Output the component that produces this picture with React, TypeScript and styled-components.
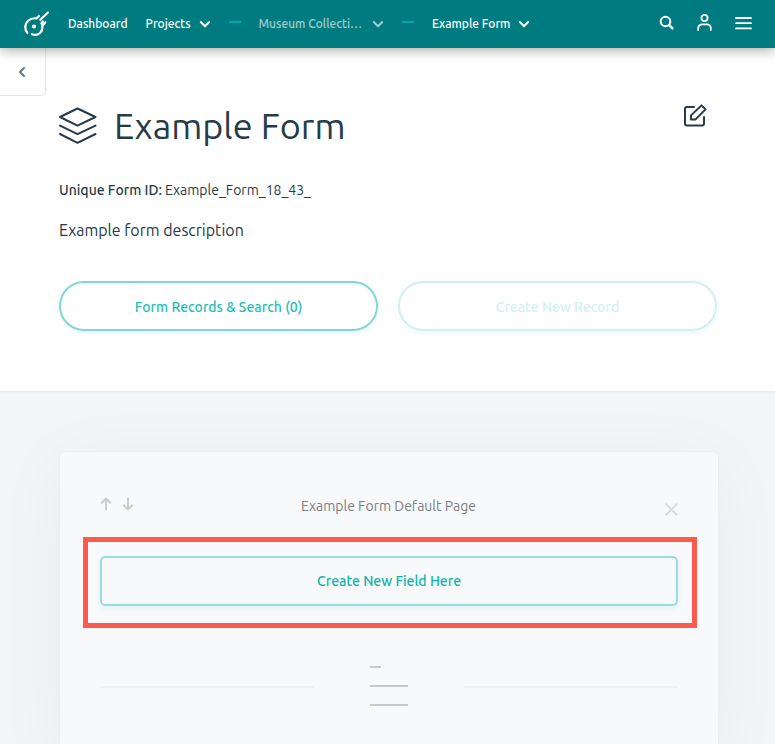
import React from "react";
import styled, { createGlobalStyle } from "styled-components";

const Global = createGlobalStyle`
  * { box-sizing: border-box; }
  body {
    margin: 0;
    background: #f4f5f7;
    color: #263b47;
    font-family: Ubuntu, "Noto Sans", "Open Sans", sans-serif;
  }
  button { font-family: inherit; margin: 0; cursor: pointer; }
  svg { display: block; flex: none; }
`;

const TopBar = styled.header`
  position: relative;
  z-index: 2;
  display: flex;
  align-items: center;
  height: 48px;
  padding: 0 23px;
  background: #007c80;
  box-shadow: 0 2px 12px rgba(0, 0, 0, 0.35);
`;

const HomeLink = styled.a`
  display: flex;
`;

const Trail = styled.nav`
  display: flex;
  align-items: center;
  flex: 1;
  min-width: 0;
  gap: 18px;
  margin-left: 18px;
`;

const NavLink = styled.a`
  color: #fff;
  font-size: 12px;
  font-weight: 500;
  line-height: 16px;
  text-decoration: none;
  white-space: nowrap;
`;

const Crumb = styled.button<{ $faded?: boolean }>`
  display: flex;
  align-items: center;
  gap: ${(p) => (p.$faded ? 10 : 8)}px;
  padding: 0;
  border: 0;
  background: none;
  color: #fff;
  opacity: ${(p) => (p.$faded ? 0.62 : 1)};
  font-size: 12px;
  font-weight: 500;
  line-height: 16px;
  white-space: nowrap;
`;

const Dash = styled.span`
  flex: none;
  width: 12px;
  height: 2px;
  margin-bottom: 4px;
  background: #00a9a6;
`;

const Tools = styled.div`
  display: flex;
  align-items: center;
  gap: 23px;
  margin-bottom: 3px;
`;

const IconButton = styled.button`
  display: flex;
  padding: 0;
  border: 0;
  background: none;
  color: inherit;
`;

const ToolButton = styled(IconButton)`
  color: #fff;
`;

const Hero = styled.section`
  position: relative;
  padding: 52px 58px 60px 59px;
  background: #fff;
  box-shadow: 0 1px 3px rgba(0, 0, 0, 0.08);
`;

const BackTab = styled.button`
  position: absolute;
  top: 0;
  left: 0;
  display: flex;
  align-items: center;
  justify-content: center;
  width: 46px;
  height: 48px;
  padding: 0 2px 0 0;
  border: 1px solid #e4e6e8;
  border-width: 0 1px 1px 0;
  border-radius: 0 0 5px 0;
  background: #fff;
  color: #68737b;
`;

const TitleRow = styled.div`
  display: flex;
  align-items: center;
  gap: 17px;
  height: 52px;
`;

const Title = styled.h1`
  flex: 1;
  margin: 0;
  font-size: 36px;
  font-weight: 400;
  line-height: 52px;
`;

const EditButton = styled(IconButton)`
  align-self: flex-start;
  margin: 4px 10px 0 0;
`;

const FormId = styled.p`
  margin: 28px 0 0;
  font-size: 14px;
  line-height: 20px;
`;

const Strong = styled.strong`
  font-weight: 500;
`;

const Description = styled.p`
  margin: 18px 0 0;
  font-size: 16px;
  line-height: 24px;
`;

const Actions = styled.div`
  display: grid;
  grid-template-columns: 1fr 1fr;
  gap: 20px;
  margin-top: 39px;
`;

const OutlineButton = styled.button<{ $tone: string; $edge: string; $square?: boolean }>`
  width: 100%;
  height: 50px;
  padding: ${(p) => (p.$square ? 0 : 2)}px 0 0;
  border: 2px solid ${(p) => p.$edge};
  border-radius: ${(p) => (p.$square ? 5 : 25)}px;
  background: transparent;
  box-shadow: 0 3px 6px rgba(0, 180, 170, 0.08);
  color: ${(p) => p.$tone};
  font-size: 14px;
  font-weight: 500;
  line-height: 20px;
`;

const Builder = styled.main`
  padding: 60px 56px 0 59px;
  overflow: hidden;
`;

const PageCard = styled.section`
  min-height: 300px;
  padding: 37px 21px 0 23px;
  border: 1px solid #eceef0;
  border-radius: 6px;
  background: #f8f9fb;
  box-shadow: 0 12px 70px rgba(0, 0, 0, 0.05);
`;

const PageHead = styled.div`
  display: grid;
  grid-template-columns: 60px 1fr 60px;
  align-items: center;
  height: 34px;
  padding: 0 19px 0 16px;
`;

const Arrows = styled.div`
  display: flex;
  gap: 8px;
  margin-bottom: 4px;
  color: #c9cdd0;
`;

const PageName = styled.h2`
  margin: 0;
  color: #7c7e80;
  font-size: 14px;
  font-weight: 400;
  line-height: 20px;
  text-align: center;
`;

const CloseButton = styled(IconButton)`
  justify-self: end;
  margin-top: 6px;
  color: #d9dbdd;
`;

const Highlight = styled.div`
  margin-top: 14px;
  padding: 14px 14px 17px 12px;
  border: 5px solid #ff5a4d;
`;

const Divider = styled.div`
  display: grid;
  grid-template-columns: 1fr 38px 1fr;
  align-items: center;
  gap: 56px;
  margin: 38px 19px 0 17px;
`;

const Rule = styled.hr`
  width: 100%;
  height: 2px;
  margin: 2px 0 0;
  border: 0;
  background: #eff0f1;
`;

const Lines = () => (
  <svg width="38" height="40" viewBox="0 0 38 40" stroke="#c6c8ca" strokeWidth="2" aria-hidden="true">
    <path d="M0 1h11M0 20h38M0 39h38" />
  </svg>
);

const Chevron = () => (
  <svg width="12" height="12" viewBox="0 0 12 12" fill="none" stroke="currentColor" strokeWidth="2" strokeLinecap="round" strokeLinejoin="round" aria-hidden="true">
    <path d="M1.800 4 6 8.200 10.200 4" />
  </svg>
);

const BackChevron = () => (
  <svg width="8" height="12" viewBox="0 0 8 12" fill="none" stroke="currentColor" strokeWidth="2" strokeLinecap="round" strokeLinejoin="round" aria-hidden="true">
    <path d="M6 2 2 6l4 4" />
  </svg>
);

const Logo = () => (
  <svg width="27" height="28" viewBox="0 0 27 28" fill="none" stroke="#fff" strokeWidth="2.200" strokeLinecap="round" strokeLinejoin="round" aria-hidden="true">
    <path d="M25 2.500 17.300 9.800M16 6 13.500 8.400C7 7.400 2.300 12 2.300 17.300c0 2.500.8 4.300 2.100 5.700M9 24.200c6 2.200 11-2 10.300-8.200l3-3.600M19.800 11.400l-1.400 2.200" />
    <circle cx="11" cy="16.500" r="2.100" fill="#fff" stroke="none" />
  </svg>
);

const SearchIcon = () => (
  <svg width="15" height="15" viewBox="0 0 15 15" fill="none" stroke="currentColor" strokeWidth="2" strokeLinecap="round" aria-hidden="true">
    <circle cx="6.500" cy="6.500" r="4.800" />
    <path d="m10.200 10.200 3.200 3.200" strokeWidth="2.400" />
  </svg>
);

const UserIcon = () => (
  <svg width="15" height="18" viewBox="0 0 15 18" fill="none" stroke="currentColor" strokeWidth="1.800" strokeLinecap="round" aria-hidden="true">
    <circle cx="7.500" cy="4" r="3.100" />
    <path d="M1.200 16v-1.700a4 4 0 0 1 4-4h4.600a4 4 0 0 1 4 4V16" />
  </svg>
);

const MenuIcon = () => (
  <svg width="17" height="14" viewBox="0 0 17 14" stroke="currentColor" strokeWidth="1.800" strokeLinecap="round" aria-hidden="true">
    <path d="M1 2h15M1 7.200h15M1 12.400h15" />
  </svg>
);

const Layers = () => (
  <svg width="38" height="38" viewBox="0 0 38 38" fill="none" stroke="currentColor" strokeWidth="2" strokeLinecap="round" strokeLinejoin="round" aria-hidden="true">
    <path d="M18.500 1.500 36.500 10 18.500 18.600 1 10zM1 18.600 18.500 27.200l18-8.600M1 27 18.500 35.800 36.500 27" />
  </svg>
);

const EditIcon = () => (
  <svg width="24" height="24" viewBox="0 0 24 24" fill="none" stroke="currentColor" strokeWidth="2" strokeLinecap="round" strokeLinejoin="round" aria-hidden="true">
    <path d="M11 3H4A2 2 0 0 0 2 5v14.500A2 2 0 0 0 4 21.500h15a2 2 0 0 0 2-2V13" />
    <path d="m18.500 1.400 4 4L12.300 15.600H8v-4.200z" />
  </svg>
);

const Arrow = ({ down }: { down?: boolean }) => (
  <svg width="14" height="14" viewBox="0 0 14 14" fill="none" stroke="currentColor" strokeWidth="2" strokeLinecap="round" strokeLinejoin="round" aria-hidden="true">
    <path d={down ? "M7 1.500v11M2.700 8.200 7 12.500l4.300-4.300" : "M7 12.500v-11M2.700 5.800 7 1.500l4.300 4.300"} />
  </svg>
);

const CloseIcon = () => (
  <svg width="13" height="13" viewBox="0 0 13 13" stroke="currentColor" strokeWidth="2" strokeLinecap="round" aria-hidden="true">
    <path d="m1.200 1.200 10.600 10.600M11.800 1.200 1.200 11.800" />
  </svg>
);

export default function App() {
  return (
    <>
      <Global />
      <TopBar>
        <HomeLink href="#home" aria-label="Home"><Logo /></HomeLink>
        <Trail aria-label="Breadcrumb">
          <NavLink href="#dashboard">Dashboard</NavLink>
          <Crumb>Projects<Chevron /></Crumb>
          <Dash />
          <Crumb $faded>Museum Collecti…<Chevron /></Crumb>
          <Dash />
          <Crumb>Example Form<Chevron /></Crumb>
        </Trail>
        <Tools>
          <ToolButton aria-label="Search"><SearchIcon /></ToolButton>
          <ToolButton aria-label="Account"><UserIcon /></ToolButton>
          <ToolButton aria-label="Menu"><MenuIcon /></ToolButton>
        </Tools>
      </TopBar>
      <Hero>
        <BackTab aria-label="Back"><BackChevron /></BackTab>
        <TitleRow>
          <Layers />
          <Title>Example Form</Title>
          <EditButton aria-label="Edit form"><EditIcon /></EditButton>
        </TitleRow>
        <FormId><Strong>Unique Form ID:</Strong> Example_Form_18_43_</FormId>
        <Description>Example form description</Description>
        <Actions>
          <OutlineButton $tone="#24bdb5" $edge="#80d7d4">Form Records &amp; Search (0)</OutlineButton>
          <OutlineButton disabled $tone="#d3f1ef" $edge="#d0efee">Create New Record</OutlineButton>
        </Actions>
      </Hero>
      <Builder>
        <PageCard>
          <PageHead>
            <Arrows>
              <IconButton aria-label="Move page up"><Arrow /></IconButton>
              <IconButton aria-label="Move page down"><Arrow down /></IconButton>
            </Arrows>
            <PageName>Example Form Default Page</PageName>
            <CloseButton aria-label="Remove page"><CloseIcon /></CloseButton>
          </PageHead>
          <Highlight>
            <OutlineButton $square $tone="#0ab5ac" $edge="#98dfdb">Create New Field Here</OutlineButton>
          </Highlight>
          <Divider><Rule /><Lines /><Rule /></Divider>
        </PageCard>
      </Builder>
    </>
  );
}
